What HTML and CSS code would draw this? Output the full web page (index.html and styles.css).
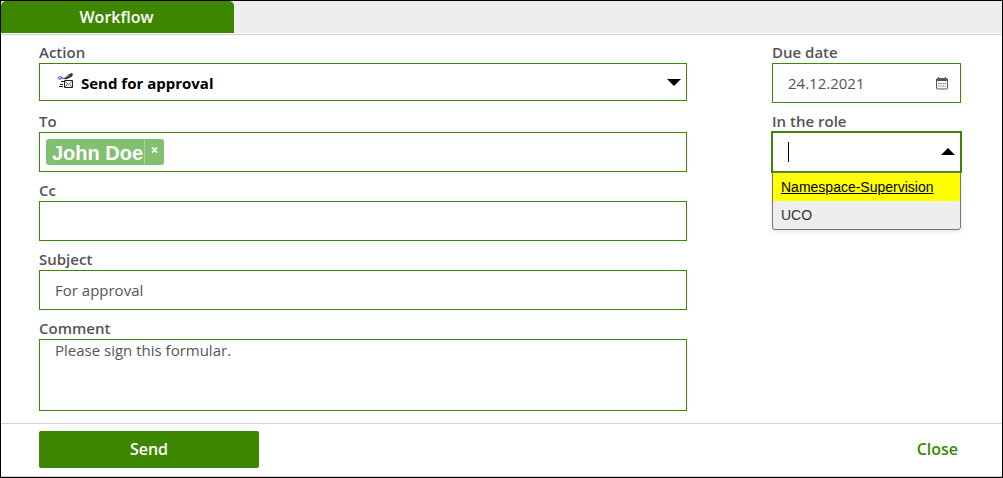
FILE: index.html
```html
<!DOCTYPE html>
<html lang="en">
<head>
<meta charset="utf-8">
<title>Workflow</title>
<meta name="viewport" content="width=device-width, initial-scale=1">
<link rel="stylesheet" href="styles.css">
</head>
<body>
<form class="dialog">
  <div class="tabs" role="tablist">
    <button class="tab" type="button" role="tab" aria-selected="true">Workflow</button>
  </div>
  <div class="fields">
    <div class="column">
      <div class="field">
        <label class="label" for="action">Action</label>
        <div class="control">
          <select class="box select" id="action"><option>Send for approval</option></select>
          <svg class="action-icon" viewBox="0 0 16 16" aria-hidden="true">
            <path d="M6.500 5.500 10.500 1.500 13.500 0 15 1 14 3.500 10.500 5.500 7 6.500Z" fill="#333"/>
            <path d="M9.500 3.800 11.500 2.200" stroke="#aaa"/>
            <path d="M.5 5c0-1.800 3.500-1.800 3 0S.5 6.500.5 5M3.500 4.500 5.500 5.500 7.500 5" fill="none" stroke="#2828c8"/>
            <path d="M6.500 7.500h8v7h-8z" fill="#fff" stroke="#222"/>
            <path d="M7 8.500l3.500 3 3.500-3M7 14l2-2.500M14 14l-2-2.500" fill="none" stroke="#333" stroke-width=".8"/>
            <path d="M3 8.500h3M2 11.500h3M1 13.500h4" stroke="#222"/>
          </svg>
          <svg class="arrow" viewBox="0 0 14 7" aria-hidden="true"><path d="M0 0h14L7 7z"/></svg>
        </div>
      </div>
      <div class="field">
        <label class="label" for="to">To</label>
        <div class="box tokens">
          <span class="token"><span class="token-name">John Doe</span><button class="token-remove" type="button" aria-label="Remove John Doe"><svg class="cross" viewBox="0 0 8 8" aria-hidden="true"><path d="M1 1l6 6M7 1 1 7"/></svg></button></span>
          <input class="token-input" id="to" type="text">
        </div>
      </div>
      <div class="field">
        <label class="label" for="cc">Cc</label>
        <input class="box" id="cc" type="text">
      </div>
      <div class="field">
        <label class="label" for="subject">Subject</label>
        <input class="box" id="subject" type="text" value="For approval">
      </div>
      <div class="field">
        <label class="label" for="comment">Comment</label>
        <textarea class="box comment" id="comment">Please sign this formular.</textarea>
      </div>
    </div>
    <div class="column">
      <div class="field">
        <label class="label" for="due">Due date</label>
        <div class="control">
          <input class="box" id="due" type="text" value="24.12.2021">
          <svg class="calendar" viewBox="0 0 12 13" aria-hidden="true">
            <rect x=".5" y="1.500" width="11" height="10.500" rx="1" fill="none" stroke="#555"/>
            <path d="M0 2h12v2H0zM2 0h1v3H2zM9 0h1v3H9z" fill="#555"/>
            <path d="M2 6.500h1.500M4.200 6.500h1.500M6.400 6.500h1.500M8.600 6.500H10M2 9h1.500M4.200 9h1.500M6.400 9h1.500M8.600 9H10" stroke="#777"/>
          </svg>
        </div>
      </div>
      <div class="field">
        <label class="label" for="role">In the role</label>
        <div class="control">
          <input class="box role-input" id="role" type="text" role="combobox" aria-expanded="true" aria-controls="roles">
          <span class="caret"></span>
          <svg class="arrow arrow-up" viewBox="0 0 14 7" aria-hidden="true"><path d="M0 7h14L7 0z"/></svg>
          <ul class="menu" id="roles" role="listbox">
            <li class="option option-active" role="option" aria-selected="true">Namespace-Supervision</li>
            <li class="option" role="option" aria-selected="false">UCO</li>
          </ul>
        </div>
      </div>
    </div>
  </div>
  <div class="footer">
    <button class="send" type="button">Send</button>
    <button class="close" type="button">Close</button>
  </div>
</form>
</body>
</html>
```
FILE: styles.css
```css
* { box-sizing: border-box; }

body {
  margin: 0;
  font-family: "Open Sans", sans-serif;
  font-size: 15px;
  color: #555;
  background: #fff;
}

button, input, select, textarea { font: inherit; color: inherit; }

.dialog {
  display: flex;
  flex-direction: column;
  min-height: 100vh;
  border: 1px solid #000;
}

.tabs {
  display: flex;
  height: 34px;
  padding-bottom: 1px;
  background: linear-gradient(#eee 32px, #fff 32px);
  border-bottom: 1px solid #d0d0d0;
}

.tab {
  width: 233px;
  border: 0;
  border-radius: 5px 5px 0 0;
  padding: 0 2px 0 0;
  background: #3d8700;
  color: #fff;
  font-size: 16px;
  font-weight: 600;
}

.fields {
  flex: 1;
  display: grid;
  grid-template-columns: 1fr 189px;
  column-gap: 85px;
  padding: 7px 41px 12px 38px;
}

.column {
  display: flex;
  flex-direction: column;
  gap: 8px;
}

.field {
  display: flex;
  flex-direction: column;
}

.label {
  height: 21px;
  line-height: 20px;
  font-weight: 600;
}

.control { position: relative; height: 40px; }

.box {
  display: block;
  width: 100%;
  height: 40px;
  margin: 0;
  padding: 0 15px;
  border: 1px solid #3d8700;
  border-radius: 0;
  background: #fff;
  outline: 0;
}

.select {
  height: 38px;
  padding: 2px 40px 0 41px;
  appearance: none;
  font-weight: 700;
  color: #000;
}

.action-icon {
  position: absolute;
  left: 19px;
  top: 10px;
  width: 16px;
  height: 16px;
}

.arrow {
  position: absolute;
  right: 6px;
  top: 16px;
  width: 14px;
  height: 7px;
  pointer-events: none;
}

.tokens {
  display: flex;
  align-items: center;
  gap: 6px;
  padding: 0 6px;
}

.token {
  display: flex;
  height: 26px;
  border-radius: 3px;
  background: #80c070;
  color: #fff;
  font: bold 20px/28px "Liberation Sans", Arial, sans-serif;
}

.token-name { padding: 0 1px 0 6px; }

.token-remove {
  width: 20px;
  padding: 7px 6px;
  border: 0;
  border-left: 1px solid #c0c0c0;
  background: none;
  display: flex;
  align-items: flex-start;
}

.cross {
  width: 8px;
  height: 8px;
  fill: none;
  stroke: #fff;
  stroke-width: 2;
}

.token-input {
  flex: 1;
  min-width: 0;
  border: 0;
  outline: 0;
  background: none;
}

.comment {
  height: 72px;
  padding: 0 15px;
  line-height: 20px;
  resize: none;
}

.calendar {
  position: absolute;
  right: 13px;
  top: 14px;
  width: 12px;
  height: 13px;
}

.role-input { box-shadow: 0 0 0 1px #3d8700; }

.caret {
  position: absolute;
  left: 16px;
  top: 10px;
  width: 1px;
  height: 20px;
  background: #000;
}

.menu {
  position: absolute;
  top: 40px;
  left: 0;
  right: 0;
  margin: 0;
  padding: 0;
  list-style: none;
  border: 1px solid #777;
  border-radius: 0 0 3px 3px;
  background: #eee;
  box-shadow: 0 2px 4px rgba(0, 0, 0, 0.1);
  font: 14px/28px "Liberation Sans", Arial, sans-serif;
  color: #333;
}

.option { height: 28px; padding: 0 8px; }

.option-active {
  background: #ff0;
  color: #000;
  text-decoration: underline;
}

.footer {
  display: flex;
  justify-content: space-between;
  align-items: center;
  height: 54px;
  padding: 0 41px 2px 38px;
  border-top: 1px solid #d0d0d0;
  border-bottom: 1px solid #d0d0d0;
}

.send, .close {
  border: 0;
  font-size: 16px;
  font-weight: 600;
}

.send {
  width: 220px;
  height: 37px;
  border-radius: 2px;
  background: #3d8700;
  color: #fff;
}

.close {
  padding: 0 3px;
  background: none;
  color: #3d8700;
}
```
